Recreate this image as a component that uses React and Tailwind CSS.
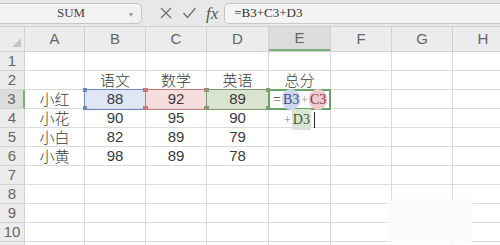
const cols = ["A", "B", "C", "D", "E", "F", "G", "H"];
const widths = ["w-[60px]", "w-[61px]", "w-[61px]", "w-[62px]", "w-[62px]", "w-[61px]", "w-[61px]", "w-[61px]"];

const data = {
  2: { B: "语文", C: "数学", D: "英语", E: "总分" },
  3: { A: "小红", B: "88", C: "92", D: "89" },
  4: { A: "小花", B: "90", C: "95", D: "90" },
  5: { A: "小白", B: "82", C: "89", D: "79" },
  6: { A: "小黄", B: "98", C: "89", D: "78" },
};

const refStyles = {
  B: "bg-[#dfe6f5] outline outline-1 outline-[#6f88bb]",
  C: "bg-[#f6dede] outline outline-1 outline-[#c27a7a]",
  D: "bg-[#d9e4d0] outline outline-1 outline-[#7d9b6d]",
};
const handle = {
  B: "bg-[#6f88bb]",
  C: "bg-[#c27a7a]",
  D: "bg-[#7d9b6d]",
};

function Handles({ c }) {
  return (
    <>
      <span className={`absolute -left-[2px] -top-[2px] w-[4px] h-[4px] ${handle[c]}`} />
      <span className={`absolute -right-[2px] -top-[2px] w-[4px] h-[4px] ${handle[c]}`} />
      <span className={`absolute -left-[2px] -bottom-[2px] w-[4px] h-[4px] ${handle[c]}`} />
      <span className={`absolute -right-[2px] -bottom-[2px] w-[4px] h-[4px] ${handle[c]}`} />
    </>
  );
}

function Cell({ r, c, w }) {
  const v = data[r]?.[c];
  const isRef = r === 3 && refStyles[c];
  const cjk = v && /[^\x00-\x7f]/.test(v);
  return (
    <div
      className={`relative ${w} h-[19px] shrink-0 border-r border-b border-[#dadada] flex items-center justify-center text-[15px] text-[#3a3a3a] ${
        isRef ? refStyles[c] + " z-10" : ""
      } ${cjk ? "font-['Noto_Sans_CJK_SC',sans-serif] font-light" : "font-['Liberation_Sans',sans-serif]"}`}
    >
      {v}
      {isRef && <Handles c={c} />}
      {r === 3 && c === "E" && <Editor />}
    </div>
  );
}

function Editor() {
  return (
    <div className="absolute -left-[1px] -top-[1px] w-[63px] h-[40px] z-20 pointer-events-none font-['Liberation_Serif',serif] text-[14px] text-[#3a3a3a]">
      <div className="h-[21px] border-2 border-[#6aa56a] bg-white flex items-center pl-[3px]">
        <span>=</span>
        <span className="ml-[1px] px-[1px] rounded-full bg-[#cdd7f1] text-[#3b4f8a]">B3</span>
        <span className="text-[#999] text-[12px] px-[1px]">+</span>
        <span className="px-[1px] rounded-full bg-[#efc9cd] text-[#8a3b45]">C3</span>
      </div>
      <div className="h-[19px] flex items-center pl-[16px]">
        <span className="text-[#888] text-[12px] pr-[1px]">+</span>
        <span className="px-[1px] bg-[#dae4d2] text-[#3f5a33]">D3</span>
        <span className="ml-[3px] w-[1px] h-[16px] bg-[#222]" />
      </div>
    </div>
  );
}

export default function App() {
  const rows = [1, 2, 3, 4, 5, 6, 7, 8, 9, 10, 11];
  return (
    <div className="relative w-[500px] h-[245px] overflow-hidden bg-white font-['Liberation_Sans',sans-serif]">
      {/* formula bar */}
      <div className="h-[27px] bg-[#e8e8e8] flex items-center border-b border-[#d0d0d0]">
        <div className="-ml-[6px] w-[148px] h-[21px] rounded-[5px] border border-[#c6c6c6] bg-[#f2f2f2] flex items-center relative">
          <span className="flex-1 text-center pl-[6px] text-[13px] text-[#444] font-['Liberation_Serif',serif]">SUM</span>
          <span className="absolute right-[8px] top-[5px] text-[8px] text-[#999]">▾</span>
        </div>
        <div className="ml-[17px] flex items-center gap-[9px] text-[#666]">
          <svg width="14" height="14" viewBox="0 0 14 14">
            <path d="M2 2 L12 12 M12 2 L2 12" stroke="#707070" strokeWidth="1.3" fill="none" />
          </svg>
          <svg width="15" height="14" viewBox="0 0 15 14">
            <path d="M1.5 7 L5.5 11.5 L13.5 2" stroke="#707070" strokeWidth="1.3" fill="none" />
          </svg>
          <span className="italic font-['Liberation_Serif',serif] text-[17px] text-[#555] leading-none">fx</span>
        </div>
        <div className="ml-[6px] flex-1 h-[21px] rounded-l-[5px] border border-r-0 border-[#c6c6c6] bg-[#f4f4f4] flex items-center pl-[9px] text-[13px] text-[#333] font-['Liberation_Serif',serif]">
          =B3+C3+D3
        </div>
      </div>

      {/* column header */}
      <div className="flex h-[25px] bg-[#ececec] border-b border-[#d2d2d2]">
        <div className="w-[25px] shrink-0 border-r border-[#d2d2d2] relative">
          <svg className="absolute right-[3px] bottom-[4px]" width="9" height="9" viewBox="0 0 9 9">
            <path d="M9 0 L9 9 L0 9 Z" fill="#c4c4c4" />
          </svg>
        </div>
        {cols.map((c, i) => (
          <div
            key={c}
            className={`${widths[i]} shrink-0 flex items-center justify-center text-[15px] text-[#666] border-r border-[#d2d2d2] ${
              c === "E" ? "bg-[#dcdcdc] border-b-2 border-b-[#7bb07b]" : ""
            }`}
          >
            {c}
          </div>
        ))}
      </div>

      {/* rows */}
      {rows.map((r) => (
        <div key={r} className="flex">
          <div
            className={`w-[25px] h-[19px] shrink-0 border-b border-r border-[#d2d2d2] flex items-center justify-center text-[15px] text-[#666] ${
              r === 3 ? "bg-[#dcdcdc] border-r-2 border-r-[#7bb07b]" : "bg-[#ececec]"
            }`}
          >
            {r}
          </div>
          {cols.map((c, i) => (
            <Cell key={c} r={r} c={c} w={widths[i]} />
          ))}
        </div>
      ))}

      {/* blurred patch */}
      <div className="absolute left-[388px] top-[199px] w-[84px] h-[46px] bg-[#fbfbfb] blur-[2px] z-30" />
    </div>
  );
}
